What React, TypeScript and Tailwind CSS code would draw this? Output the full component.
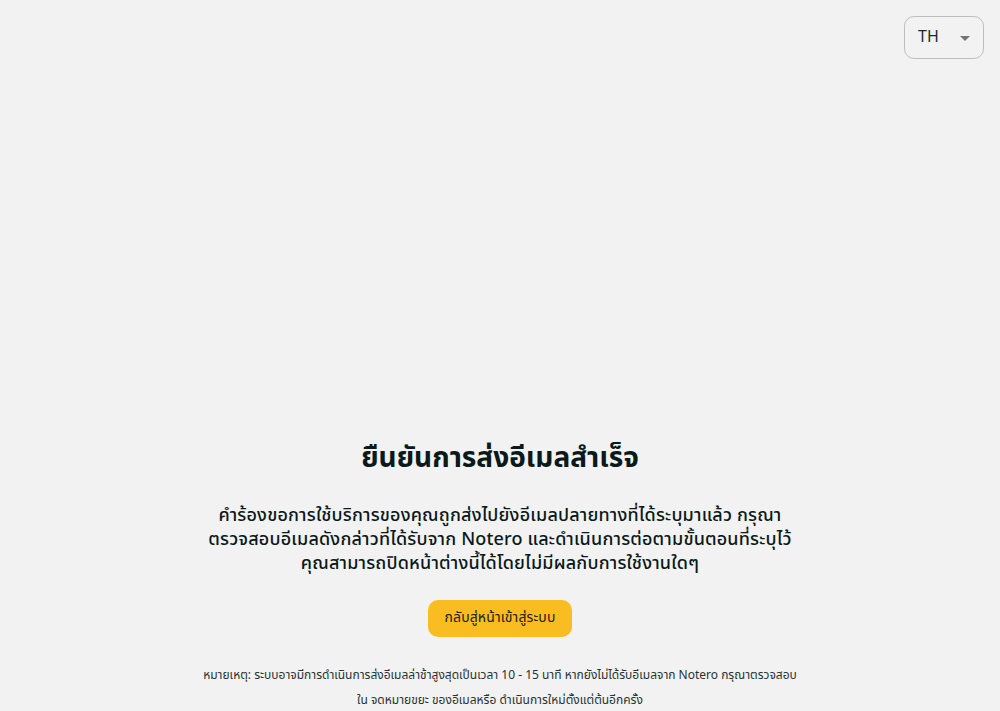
export default function App() {
  return (
    <div className="flex h-[711px] flex-col overflow-hidden bg-[#f2f2f2] font-['Noto_Sans','Noto_Sans_Thai',sans-serif] text-[#0a1919]">
      <header className="flex justify-end px-4 pt-4">
        <button className="flex h-[43px] w-20 items-center justify-between rounded-[10px] border border-[#bebebe] pl-[13px] pr-[6px] text-base text-[#1c2a2a]">
          <span className="pb-[3px]">TH</span>
          <svg className="size-6 text-[#757575]" viewBox="0 0 24 24" fill="currentColor"><path d="M7 10l5 5 5-5z" /></svg>
        </button>
      </header>
      <main className="mt-[373px] flex flex-col items-center text-center whitespace-nowrap">
        <h1 className="text-[28px] leading-[48px] font-bold">ยืนยันการส่งอีเมลสำเร็จ</h1>
        <p className="mt-[22px] text-lg leading-6 font-medium tracking-[0.18px]">
          คำร้องขอการใช้บริการของคุณถูกส่งไปยังอีเมลปลายทางที่ได้ระบุมาแล้ว กรุณา<br />
          ตรวจสอบอีเมลดังกล่าวที่ได้รับจาก Notero และดำเนินการต่อตามขั้นตอนที่ระบุไว้<br />
          คุณสามารถปิดหน้าต่างนี้ได้โดยไม่มีผลกับการใช้งานใดๆ
        </p>
        <button className="mt-[26px] h-[37px] w-36 rounded-[10px] bg-[#f9bd22] pb-1 text-sm tracking-[0.12px] text-[#242010]">กลับสู่หน้าเข้าสู่ระบบ</button>
        <p className="mt-[25px] text-xs leading-[25px] text-[#263333]">
          หมายเหตุ: ระบบอาจมีการดำเนินการส่งอีเมลล่าช้าสูงสุดเป็นเวลา 10 - 15 นาที หากยังไม่ได้รับอีเมลจาก Notero กรุณาตรวจสอบ<br />
          ใน จดหมายขยะ ของอีเมลหรือ ดำเนินการใหม่ตั้งแต่ต้นอีกครั้ง
        </p>
      </main>
    </div>
  );
}
